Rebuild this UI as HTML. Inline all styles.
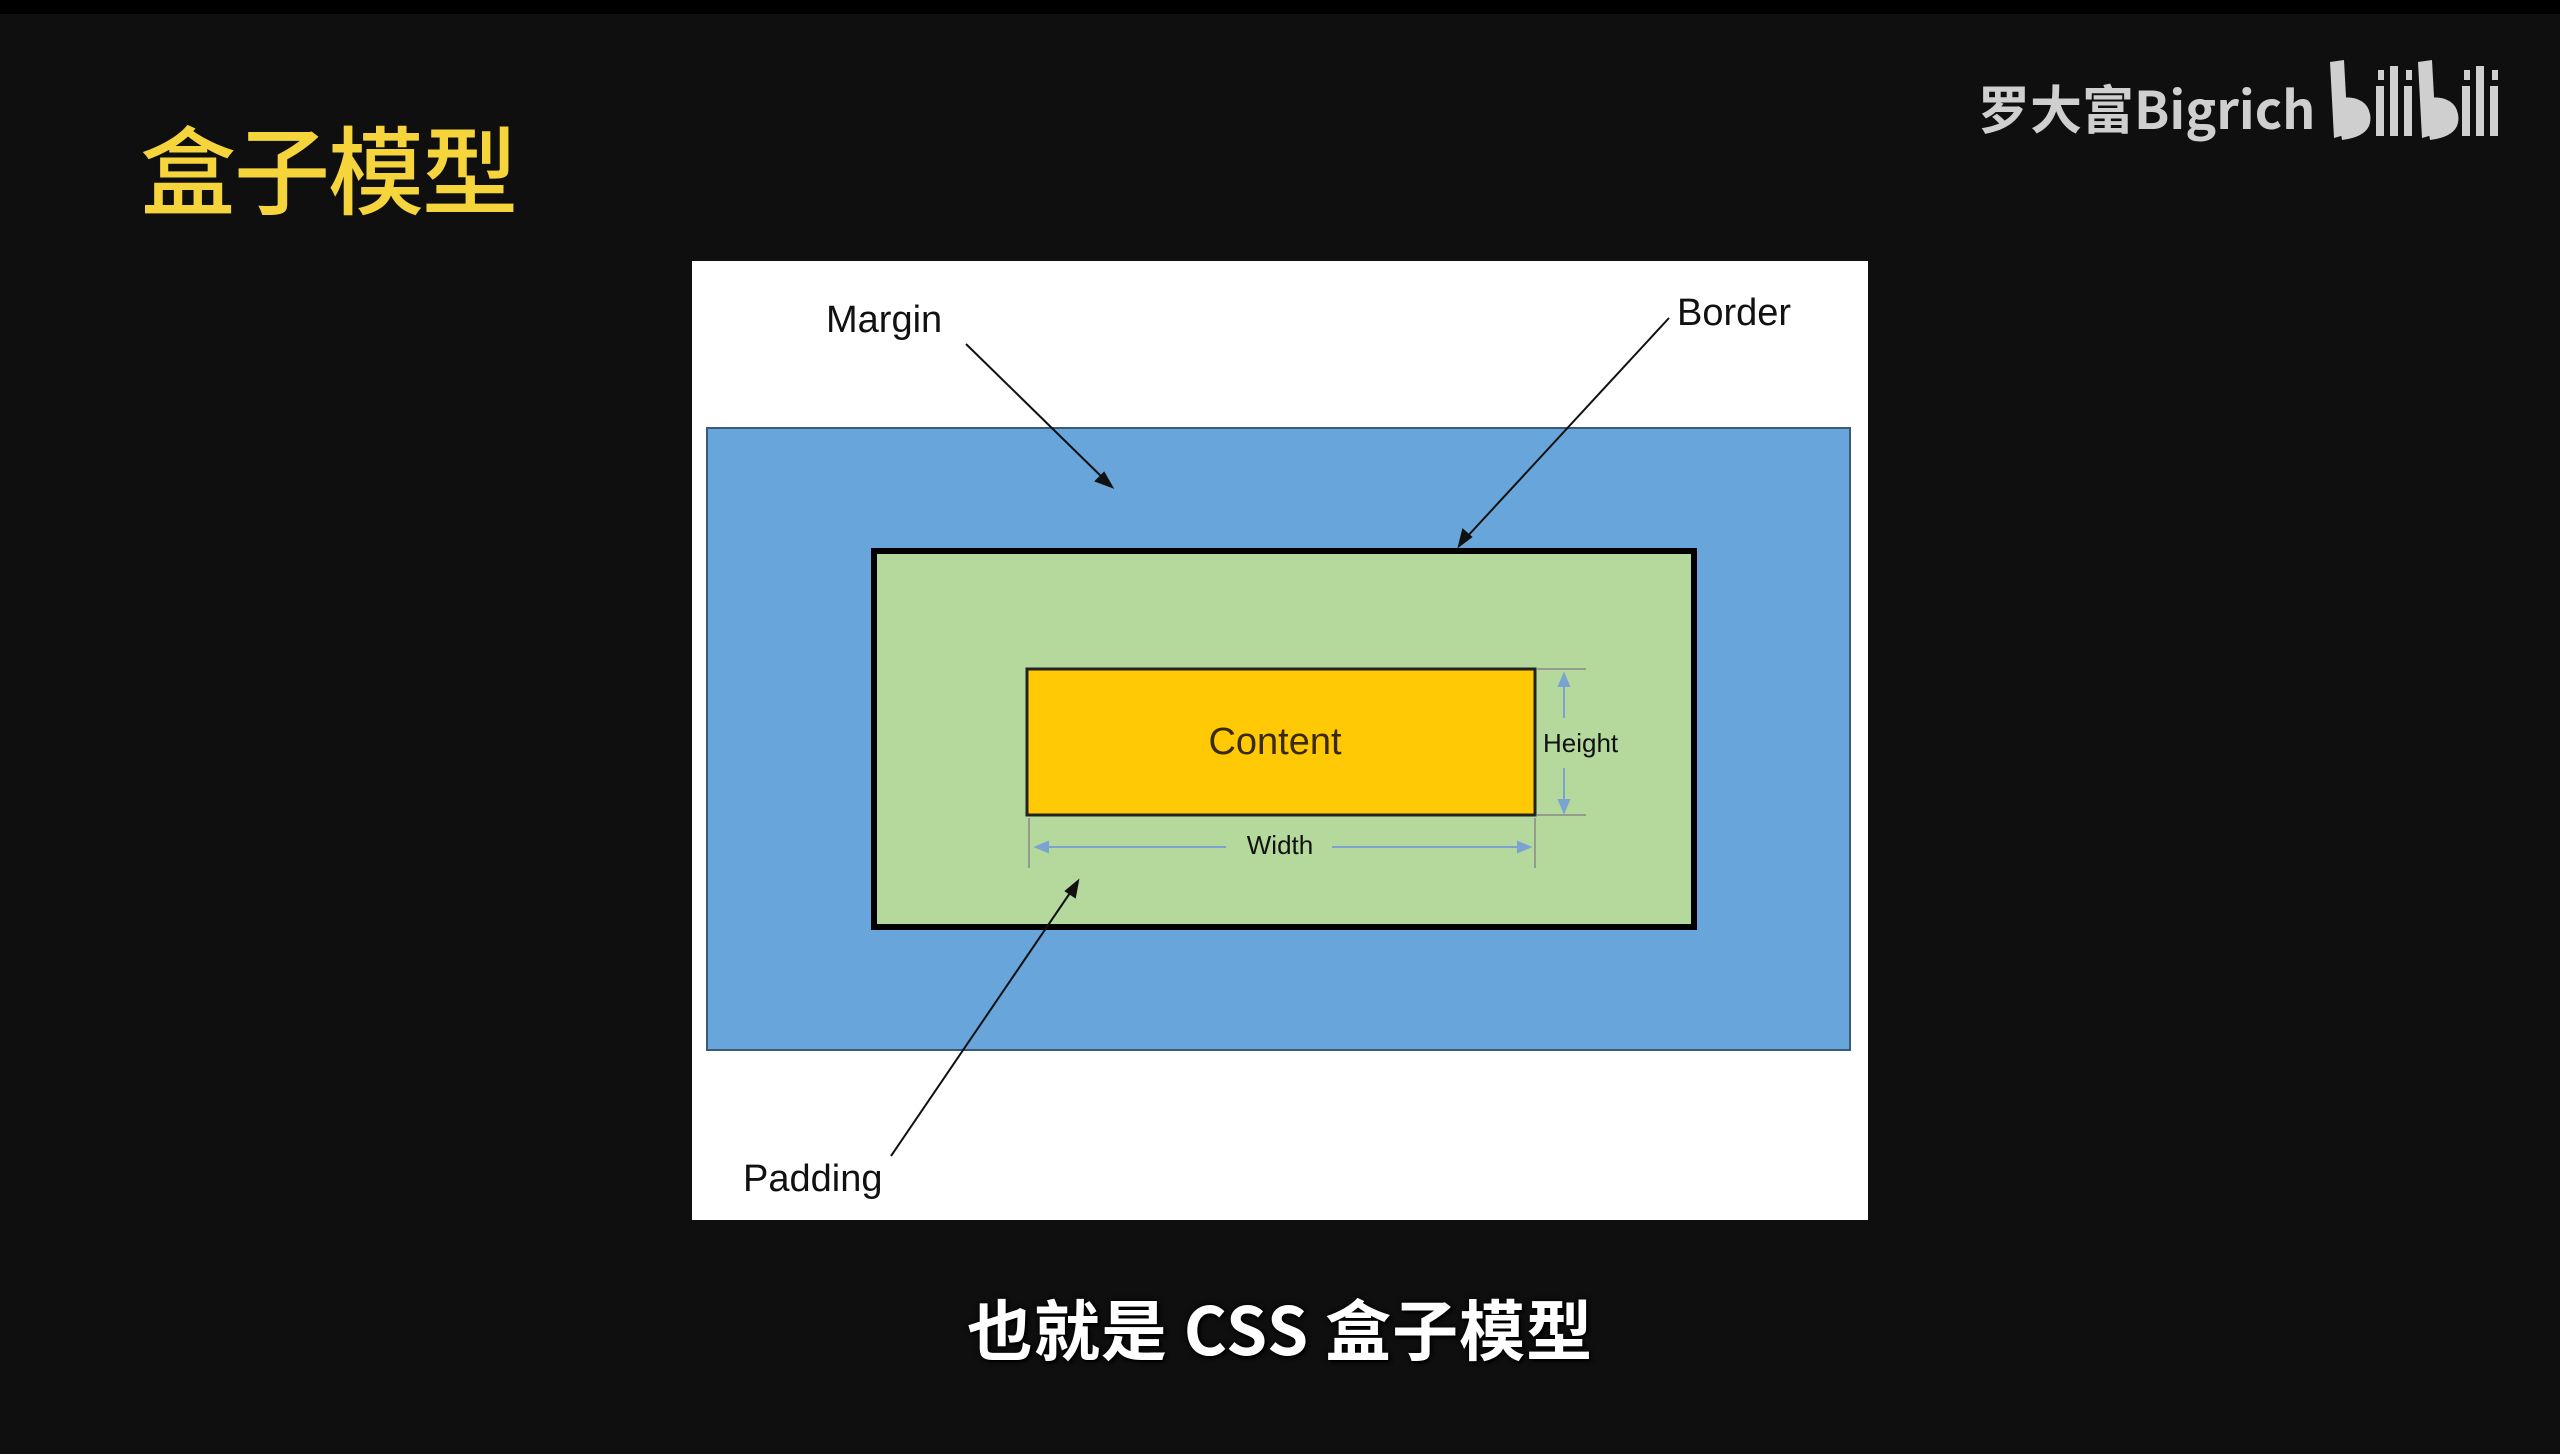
<!DOCTYPE html>
<html><head><meta charset="utf-8"><style>
html,body{margin:0;padding:0;width:2560px;height:1454px;background:#0f0f0f;overflow:hidden;position:relative;font-family:"Liberation Sans","Noto Sans CJK SC",sans-serif}
.top{position:absolute;left:0;top:0;width:2560px;height:14px;background:#000}
.title{position:absolute;left:140px;top:108px;font-size:96px;color:#f6d43c;font-family:"Noto Sans CJK SC",sans-serif;line-height:1.2;letter-spacing:-2px;font-weight:500}
.logo{position:absolute;left:1978px;top:76px;font-size:52px;color:#cfcfcf;font-family:"Noto Sans CJK SC",sans-serif;line-height:1.2;font-weight:700}
.sub{position:absolute;left:0;width:2560px;text-align:center;top:1288px;font-size:66px;color:#fff;font-family:"Noto Sans CJK SC",sans-serif;line-height:1.2;font-weight:700;letter-spacing:1px;text-shadow:0 0 6px #000,2px 2px 3px #000}
svg{position:absolute;left:0;top:0}
</style></head><body>
<div class="top"></div>
<div class="title">盒子模型</div>
<div class="logo">罗大富Bigrich</div>
<svg width="2560" height="1454">
<g fill="#cfcfcf">
<path d="M2330 62 l14 -2 l4 74 l-14 4z"/>
<path d="M2336 98 q30 -4 34 16 q4 22 -28 26z"/>
<path d="M2376 86 h8 v50 h-8z M2378 70 h6 v10 h-6z"/>
<path d="M2390 66 h8 v70 h-8z"/>
<path d="M2404 86 h8 v50 h-8z M2406 70 h6 v10 h-6z"/>
<path d="M2418 62 l14 -2 l4 74 l-14 4z"/>
<path d="M2424 98 q30 -4 34 16 q4 22 -28 26z"/>
<path d="M2462 86 h8 v50 h-8z M2464 70 h6 v10 h-6z"/>
<path d="M2476 66 h8 v70 h-8z"/>
<path d="M2490 86 h8 v50 h-8z M2492 70 h6 v10 h-6z"/>
</g>
<rect x="692" y="261" width="1176" height="959" fill="#fff"/>
<rect x="707" y="428" width="1143" height="622" fill="#67a5da" stroke="#3a5a78" stroke-width="2"/>
<rect x="874" y="551" width="820" height="376" fill="#b5d99c" stroke="#000" stroke-width="6"/>
<rect x="1027" y="669" width="508" height="146" fill="#ffc906" stroke="#222" stroke-width="3"/>
<g font-family="Liberation Sans,sans-serif" fill="#111">
<text x="826" y="332" font-size="38">Margin</text>
<text x="1677" y="325" font-size="38">Border</text>
<text x="743" y="1191" font-size="38">Padding</text>
<text x="1275" y="754" font-size="38" text-anchor="middle" fill="#3a2a00">Content</text>
<text x="1543" y="752" font-size="26">Height</text>
<text x="1280" y="854" font-size="26" text-anchor="middle">Width</text>
</g>
<g stroke="#111" stroke-width="2" fill="#111">
<line x1="966" y1="344" x2="1106" y2="481"/><path d="M1112 487 l-16 -6 l8 -8z"/>
<line x1="1669" y1="318" x2="1465" y2="539"/><path d="M1459 546 l4 -16 l8 7z"/>
<line x1="891" y1="1156" x2="1072" y2="890"/><path d="M1078 881 l-3 16 l-9 -6z"/>
</g>
<g stroke="#7aa3cf" stroke-width="2" fill="#7aa3cf">
<line x1="1564" y1="678" x2="1564" y2="718"/><line x1="1564" y1="768" x2="1564" y2="808"/>
<path d="M1564 674 l-5 12 h10z M1564 812 l-5 -12 h10z"/>
<line x1="1040" y1="847" x2="1226" y2="847"/><line x1="1332" y1="847" x2="1525" y2="847"/>
<path d="M1036 847 l12 -5 v10z M1530 847 l-12 -5 v10z"/>
</g>
<g stroke="#888" stroke-width="1.5">
<line x1="1537" y1="669" x2="1586" y2="669"/><line x1="1537" y1="815" x2="1586" y2="815"/>
<line x1="1029" y1="818" x2="1029" y2="868"/><line x1="1535" y1="818" x2="1535" y2="868"/>
</g>
</svg>
<div class="sub">也就是 CSS 盒子模型</div>
</body></html>
